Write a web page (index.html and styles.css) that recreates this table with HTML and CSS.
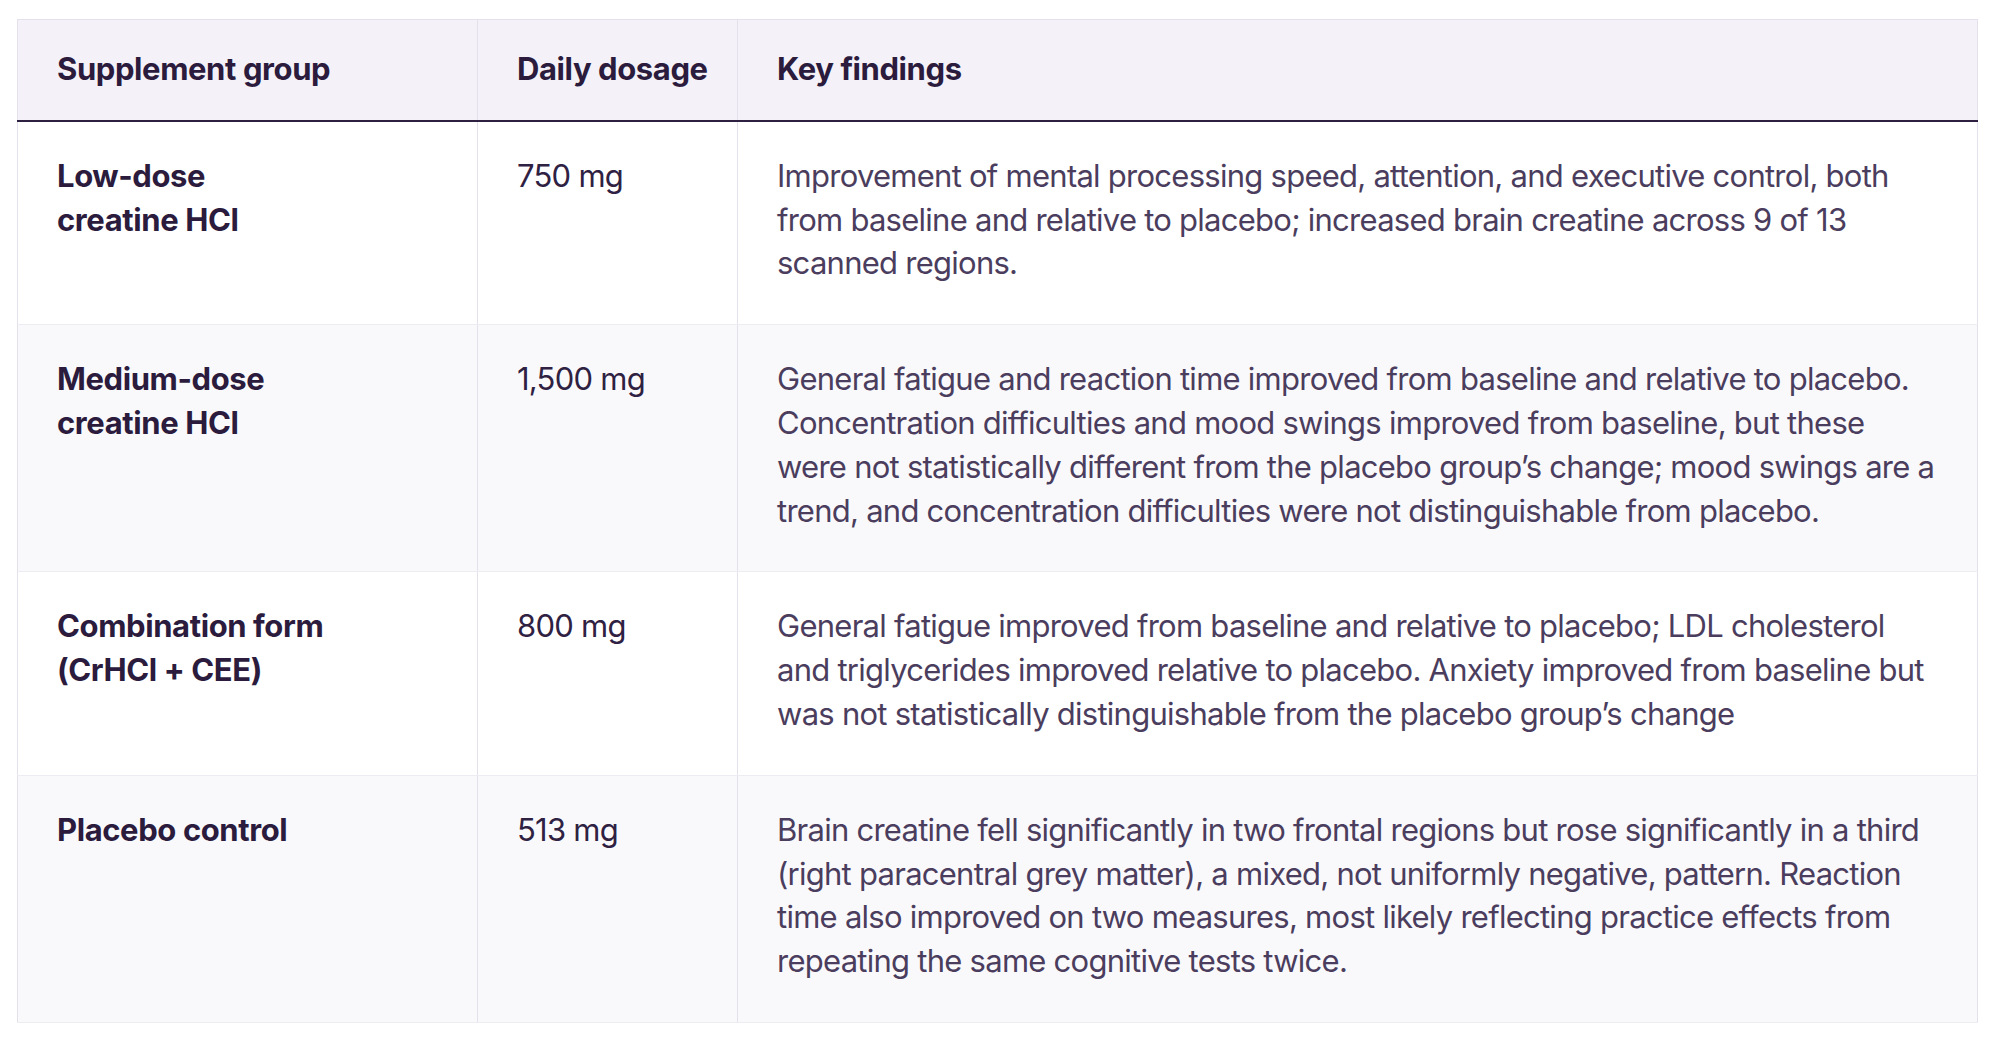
FILE: index.html
```html
<!DOCTYPE html>
<html lang="en">
<head>
<meta charset="utf-8">
<title>Creatine supplement groups</title>
<link rel="stylesheet" href="styles.css">
</head>
<body>
<main class="wrap">
  <table class="findings">
    <colgroup>
      <col class="c-group">
      <col class="c-dose">
      <col class="c-find">
    </colgroup>
    <thead>
      <tr>
        <th>Supplement group</th>
        <th>Daily dosage</th>
        <th>Key findings</th>
      </tr>
    </thead>
    <tbody>
      <tr>
        <td class="grp">Low-dose<br>creatine HCl</td>
        <td class="dose">750 mg</td>
        <td class="find">Improvement of mental processing speed, attention, and executive control, both<br>from baseline and relative to placebo; increased brain creatine across 9 of 13<br>scanned regions.</td>
      </tr>
      <tr>
        <td class="grp">Medium-dose<br>creatine HCl</td>
        <td class="dose">1,500 mg</td>
        <td class="find">General fatigue and reaction time improved from baseline and relative to placebo.<br>Concentration difficulties and mood swings improved from baseline, but these<br>were not statistically different from the placebo group’s change; mood swings are a<br>trend, and concentration difficulties were not distinguishable from placebo.</td>
      </tr>
      <tr>
        <td class="grp">Combination form<br>(CrHCl + CEE)</td>
        <td class="dose">800 mg</td>
        <td class="find">General fatigue improved from baseline and relative to placebo; LDL cholesterol<br>and triglycerides improved relative to placebo. Anxiety improved from baseline but<br>was not statistically distinguishable from the placebo group’s change</td>
      </tr>
      <tr>
        <td class="grp">Placebo control</td>
        <td class="dose">513 mg</td>
        <td class="find">Brain creatine fell significantly in two frontal regions but rose significantly in a third<br>(right paracentral grey matter), a mixed, not uniformly negative, pattern. Reaction<br>time also improved on two measures, most likely reflecting practice effects from<br>repeating the same cognitive tests twice.</td>
      </tr>
    </tbody>
  </table>
</main>
</body>
</html>
```

FILE: styles.css
```css
html, body {
  margin: 0;
  padding: 0;
  background: #ffffff;
}

body {
  font-family: Inter, "Liberation Sans", sans-serif;
  color: #2b1b3d;
}

.wrap {
  padding: 19px 19px 19px 17px;
}

.findings {
  width: 1961px;
  border-collapse: collapse;
  table-layout: fixed;
  border: 1px solid #e4e0ec;
  font-size: 31px;
  line-height: 43.8px;
  letter-spacing: -0.74px;
}

.c-group { width: 460px; }
.c-dose { width: 260px; }

.findings th {
  background: #f4f2f8;
  text-align: left;
  font-weight: 700;
  letter-spacing: -0.4px;
  padding: 27px 39px 29px 39px;
  border-right: 1px solid #e4e0ec;
  border-bottom: 2px solid #2e2040;
  color: #2b1b3d;
  white-space: nowrap;
}

.findings td {
  vertical-align: top;
  padding: 32px 39px 39px 39px;
  border-right: 1px solid #e4e0ec;
  border-bottom: 1px solid #eeebf3;
  white-space: nowrap;
}

.findings tbody tr:nth-child(even) td {
  background: #f9f9fc;
}

.findings td.grp {
  font-weight: 700;
  letter-spacing: -0.4px;
  color: #2b1b3d;
}

.dose {
  color: #2f2142;
}

.find {
  color: #4b3d5d;
}
```
